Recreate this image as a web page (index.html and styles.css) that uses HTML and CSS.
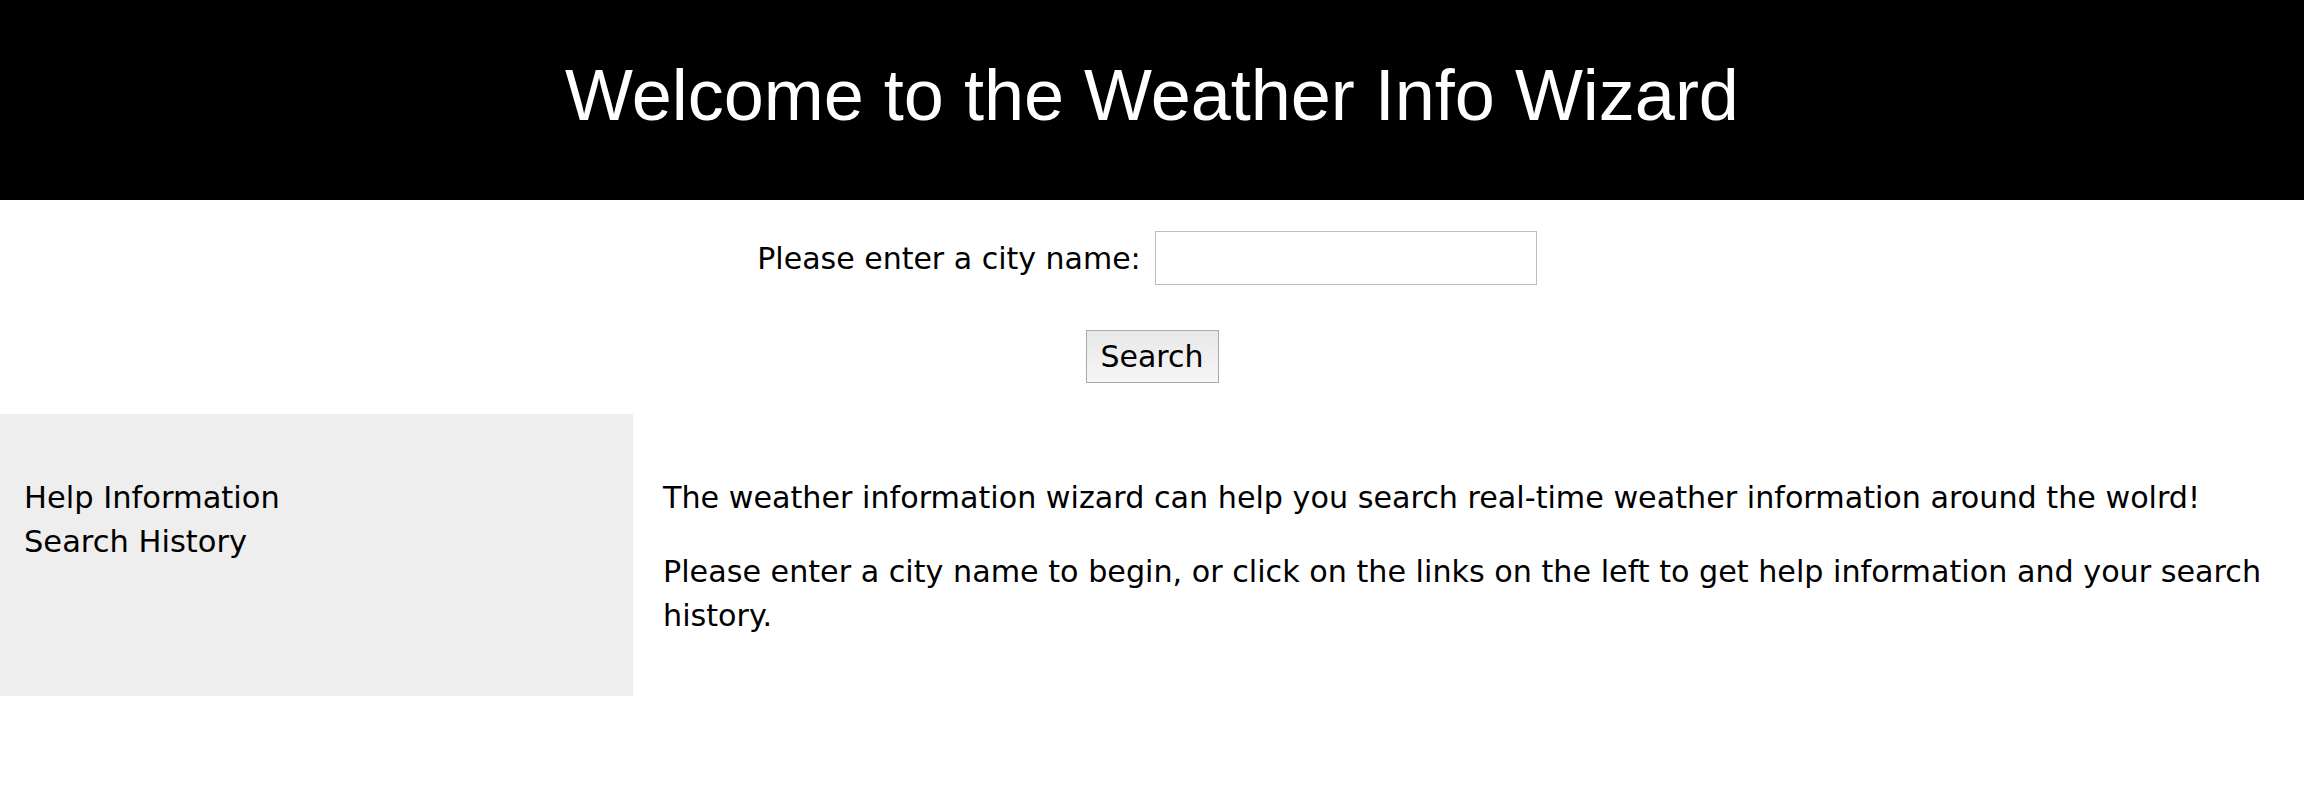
FILE: index.html
```html
<!DOCTYPE html>
<html lang="en">
<head>
<meta charset="utf-8">
<title>Weather Info Wizard</title>
<link rel="stylesheet" href="styles.css">
</head>
<body>
<header class="site-header">
  <h1 class="site-title">Welcome to the Weather Info Wizard</h1>
</header>
<form class="search-form">
  <div class="search-row">
    <label class="search-label" for="city">Please enter a city name:</label>
    <input class="search-input" type="text" id="city" name="city">
  </div>
  <button class="search-button" type="button">Search</button>
</form>
<div class="content">
  <nav class="sidebar">
    <ul class="sidebar-list">
      <li><a class="sidebar-link" href="#">Help Information</a></li>
      <li><a class="sidebar-link" href="#">Search History</a></li>
    </ul>
  </nav>
  <main class="main">
    <p class="main-text">The weather information wizard can help you search real-time weather information around the wolrd!</p>
    <p class="main-text">Please enter a city name to begin, or click on the links on the left to get help information and your search history.</p>
  </main>
</div>
</body>
</html>
```

FILE: styles.css
```css
html, body {
  margin: 0;
  padding: 0;
  background: #ffffff;
}

body {
  font-family: "DejaVu Sans", Verdana, sans-serif;
  font-size: 30px;
  color: #000000;
}

.site-header {
  box-sizing: border-box;
  height: 200px;
  background: #000000;
  color: #ffffff;
  padding: 54px 0 0;
  text-align: center;
}

.site-title {
  margin: 0;
  font-family: "Liberation Sans", Arial, sans-serif;
  font-size: 72px;
  font-weight: normal;
  line-height: 83px;
}

.search-form {
  display: flex;
  flex-direction: column;
  align-items: center;
  padding: 31px 0 31px;
  gap: 45px;
}

.search-row {
  display: flex;
  align-items: center;
  gap: 14px;
  padding-right: 10px;
}

.search-label {
  font-size: 30px;
}

.search-input {
  box-sizing: border-box;
  width: 382px;
  height: 54px;
  margin: 0;
  border: 1px solid #bdbdbd;
  background: #ffffff;
  font-family: "DejaVu Sans", Verdana, sans-serif;
  font-size: 30px;
  padding: 0 8px;
}

.search-button {
  box-sizing: border-box;
  width: 133px;
  height: 53px;
  margin: 0;
  padding: 0;
  border: 1px solid #a9a9a9;
  background: linear-gradient(#e8e8e8, #f6f6f6);
  font-family: "DejaVu Sans", Verdana, sans-serif;
  font-size: 30px;
  color: #000000;
}

.content {
  display: flex;
  align-items: stretch;
}

.sidebar {
  flex: 0 0 633px;
  background: #eeeeee;
  padding: 62px 24px 58px;
  box-sizing: border-box;
}

.sidebar-list {
  list-style: none;
  margin: 0;
  padding: 0;
  line-height: 44px;
  font-size: 30.5px;
}

.sidebar-link {
  color: #000000;
  text-decoration: none;
}

.main {
  flex: 1;
  padding: 32px 30px 28px 30px;
}

.main-text {
  margin: 30px 0;
  line-height: 44px;
  font-size: 30.2px;
}
```
